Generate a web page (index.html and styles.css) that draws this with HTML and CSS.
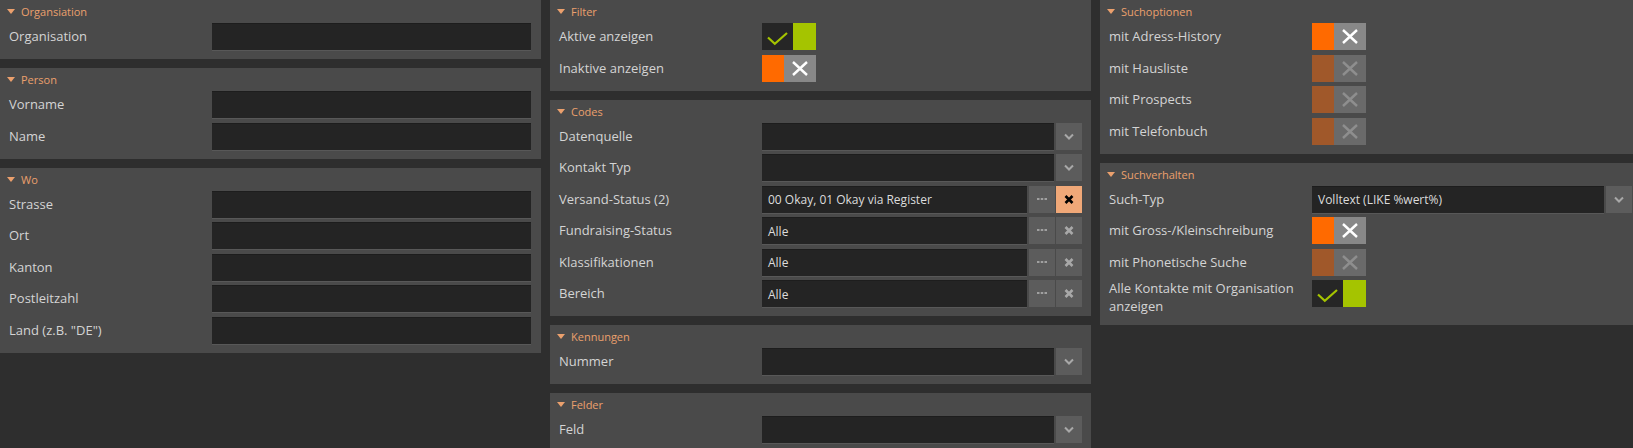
FILE: index.html
```html
<!DOCTYPE html>
<html>
<head>
  <title>Kontaktsuche</title>
  <link rel="stylesheet" href="styles.css">
</head>
<body>
  <div class="page">

    <div class="col">
      <section class="panel">
        <div class="panel-head"><span class="caret"></span>Organsiation</div>
        <div class="row"><span class="label">Organisation</span><div class="field"><span class="input"></span></div></div>
      </section>

      <section class="panel">
        <div class="panel-head"><span class="caret"></span>Person</div>
        <div class="row"><span class="label">Vorname</span><div class="field"><span class="input"></span></div></div>
        <div class="row"><span class="label">Name</span><div class="field"><span class="input"></span></div></div>
      </section>

      <section class="panel">
        <div class="panel-head"><span class="caret"></span>Wo</div>
        <div class="row"><span class="label">Strasse</span><div class="field"><span class="input"></span></div></div>
        <div class="row"><span class="label">Ort</span><div class="field"><span class="input"></span></div></div>
        <div class="row"><span class="label">Kanton</span><div class="field"><span class="input"></span></div></div>
        <div class="row"><span class="label">Postleitzahl</span><div class="field"><span class="input"></span></div></div>
        <div class="row"><span class="label">Land (z.B. "DE")</span><div class="field"><span class="input"></span></div></div>
      </section>
    </div>

    <div class="col">
      <section class="panel">
        <div class="panel-head"><span class="caret"></span>Filter</div>
        <div class="row">
          <span class="label">Aktive anzeigen</span>
          <div class="toggle on">
            <span class="knob"><svg viewBox="0 0 31 27" width="31" height="27"><path d="M6 14.5 L12.8 20.8 L25 10" fill="none" stroke="#a5c400" stroke-width="2.2"/></svg></span>
            <span class="state"></span>
          </div>
        </div>
        <div class="row">
          <span class="label">Inaktive anzeigen</span>
          <div class="toggle off">
            <span class="state"></span>
            <span class="knob"><svg viewBox="0 0 32 27" width="32" height="27"><path d="M9 7 L23 20 M23 7 L9 20" fill="none" stroke="#fff" stroke-width="2.4"/></svg></span>
          </div>
        </div>
      </section>

      <section class="panel">
        <div class="panel-head"><span class="caret"></span>Codes</div>
        <div class="row">
          <span class="label">Datenquelle</span>
          <div class="field"><span class="input"></span><span class="btn"><svg viewBox="0 0 26 27" width="26" height="27"><path d="M9 11.5 L13 15.5 L17 11.5" fill="none" stroke="#a8a8a8" stroke-width="2"/></svg></span></div>
        </div>
        <div class="row">
          <span class="label">Kontakt Typ</span>
          <div class="field"><span class="input"></span><span class="btn"><svg viewBox="0 0 26 27" width="26" height="27"><path d="M9 11.5 L13 15.5 L17 11.5" fill="none" stroke="#a8a8a8" stroke-width="2"/></svg></span></div>
        </div>
        <div class="row">
          <span class="label">Versand-Status (2)</span>
          <div class="field">
            <span class="input">00 Okay, 01 Okay via Register</span>
            <span class="btn"><svg viewBox="0 0 26 27" width="26" height="27"><g fill="#a0a0a0"><rect x="8" y="12" width="2.5" height="2"/><rect x="11.75" y="12" width="2.5" height="2"/><rect x="15.5" y="12" width="2.5" height="2"/></g></svg></span>
            <span class="btn clear active"><svg viewBox="0 0 26 27" width="26" height="27"><path d="M9.5 10 L16.5 17 M16.5 10 L9.5 17" fill="none" stroke="#000" stroke-width="2.6"/></svg></span>
          </div>
        </div>
        <div class="row">
          <span class="label">Fundraising-Status</span>
          <div class="field">
            <span class="input">Alle</span>
            <span class="btn"><svg viewBox="0 0 26 27" width="26" height="27"><g fill="#a0a0a0"><rect x="8" y="12" width="2.5" height="2"/><rect x="11.75" y="12" width="2.5" height="2"/><rect x="15.5" y="12" width="2.5" height="2"/></g></svg></span>
            <span class="btn clear"><svg viewBox="0 0 26 27" width="26" height="27"><path d="M9.5 10 L16.5 17 M16.5 10 L9.5 17" fill="none" stroke="#a8a8a8" stroke-width="2.6"/></svg></span>
          </div>
        </div>
        <div class="row">
          <span class="label">Klassifikationen</span>
          <div class="field">
            <span class="input">Alle</span>
            <span class="btn"><svg viewBox="0 0 26 27" width="26" height="27"><g fill="#a0a0a0"><rect x="8" y="12" width="2.5" height="2"/><rect x="11.75" y="12" width="2.5" height="2"/><rect x="15.5" y="12" width="2.5" height="2"/></g></svg></span>
            <span class="btn clear"><svg viewBox="0 0 26 27" width="26" height="27"><path d="M9.5 10 L16.5 17 M16.5 10 L9.5 17" fill="none" stroke="#a8a8a8" stroke-width="2.6"/></svg></span>
          </div>
        </div>
        <div class="row">
          <span class="label">Bereich</span>
          <div class="field">
            <span class="input">Alle</span>
            <span class="btn"><svg viewBox="0 0 26 27" width="26" height="27"><g fill="#a0a0a0"><rect x="8" y="12" width="2.5" height="2"/><rect x="11.75" y="12" width="2.5" height="2"/><rect x="15.5" y="12" width="2.5" height="2"/></g></svg></span>
            <span class="btn clear"><svg viewBox="0 0 26 27" width="26" height="27"><path d="M9.5 10 L16.5 17 M16.5 10 L9.5 17" fill="none" stroke="#a8a8a8" stroke-width="2.6"/></svg></span>
          </div>
        </div>
      </section>

      <section class="panel">
        <div class="panel-head"><span class="caret"></span>Kennungen</div>
        <div class="row">
          <span class="label">Nummer</span>
          <div class="field"><span class="input"></span><span class="btn"><svg viewBox="0 0 26 27" width="26" height="27"><path d="M9 11.5 L13 15.5 L17 11.5" fill="none" stroke="#a8a8a8" stroke-width="2"/></svg></span></div>
        </div>
      </section>

      <section class="panel">
        <div class="panel-head"><span class="caret"></span>Felder</div>
        <div class="row">
          <span class="label">Feld</span>
          <div class="field"><span class="input"></span><span class="btn"><svg viewBox="0 0 26 27" width="26" height="27"><path d="M9 11.5 L13 15.5 L17 11.5" fill="none" stroke="#a8a8a8" stroke-width="2"/></svg></span></div>
        </div>
      </section>
    </div>

    <div class="col">
      <section class="panel">
        <div class="panel-head"><span class="caret"></span>Suchoptionen</div>
        <div class="row">
          <span class="label">mit Adress-History</span>
          <div class="toggle off">
            <span class="state"></span>
            <span class="knob"><svg viewBox="0 0 32 27" width="32" height="27"><path d="M9 7 L23 20 M23 7 L9 20" fill="none" stroke="#fff" stroke-width="2.4"/></svg></span>
          </div>
        </div>
        <div class="row">
          <span class="label">mit Hausliste</span>
          <div class="toggle off disabled">
            <span class="state"></span>
            <span class="knob"><svg viewBox="0 0 32 27" width="32" height="27"><path d="M9 7 L23 20 M23 7 L9 20" fill="none" stroke="#8e8e8e" stroke-width="2.4"/></svg></span>
          </div>
        </div>
        <div class="row">
          <span class="label">mit Prospects</span>
          <div class="toggle off disabled">
            <span class="state"></span>
            <span class="knob"><svg viewBox="0 0 32 27" width="32" height="27"><path d="M9 7 L23 20 M23 7 L9 20" fill="none" stroke="#8e8e8e" stroke-width="2.4"/></svg></span>
          </div>
        </div>
        <div class="row">
          <span class="label">mit Telefonbuch</span>
          <div class="toggle off disabled">
            <span class="state"></span>
            <span class="knob"><svg viewBox="0 0 32 27" width="32" height="27"><path d="M9 7 L23 20 M23 7 L9 20" fill="none" stroke="#8e8e8e" stroke-width="2.4"/></svg></span>
          </div>
        </div>
      </section>

      <section class="panel">
        <div class="panel-head"><span class="caret"></span>Suchverhalten</div>
        <div class="row">
          <span class="label">Such-Typ</span>
          <div class="field"><span class="input">Volltext (LIKE %wert%)</span><span class="btn"><svg viewBox="0 0 26 27" width="26" height="27"><path d="M9 11.5 L13 15.5 L17 11.5" fill="none" stroke="#a8a8a8" stroke-width="2"/></svg></span></div>
        </div>
        <div class="row">
          <span class="label">mit Gross-/Kleinschreibung</span>
          <div class="toggle off">
            <span class="state"></span>
            <span class="knob"><svg viewBox="0 0 32 27" width="32" height="27"><path d="M9 7 L23 20 M23 7 L9 20" fill="none" stroke="#fff" stroke-width="2.4"/></svg></span>
          </div>
        </div>
        <div class="row">
          <span class="label">mit Phonetische Suche</span>
          <div class="toggle off disabled">
            <span class="state"></span>
            <span class="knob"><svg viewBox="0 0 32 27" width="32" height="27"><path d="M9 7 L23 20 M23 7 L9 20" fill="none" stroke="#8e8e8e" stroke-width="2.4"/></svg></span>
          </div>
        </div>
        <div class="row tall">
          <span class="label">Alle Kontakte mit Organisation anzeigen</span>
          <div class="toggle on">
            <span class="knob"><svg viewBox="0 0 31 27" width="31" height="27"><path d="M6 14.5 L12.8 20.8 L25 10" fill="none" stroke="#a5c400" stroke-width="2.2"/></svg></span>
            <span class="state"></span>
          </div>
        </div>
      </section>
    </div>

  </div>
</body>
</html>
```

FILE: styles.css
```css
:root {
  --bg-color: #2e2e2e;
  --panel-color: #4a4a4a;
  --input-color: #242424;
  --button-color: #5c5c5c;
  --accent-color: #eba06d;
  --text-color: #d4d4d4;
  --green: #a5c400;
  --orange: #ff6a00;
}

body {
  margin: 0;
  height: 448px;
  overflow: hidden;
  background: var(--bg-color);
  color: var(--text-color);
  font-family: 'Open Sans', 'Noto Sans', sans-serif;
  font-size: 13px;
}

.page {
  display: flex;
  gap: 9px;
}

.col {
  width: 541px;
  flex-shrink: 0;
  display: flex;
  flex-direction: column;
  gap: 9px;
}

.panel {
  background: var(--panel-color);
  padding: 0 9px 9px;
  display: flex;
  flex-direction: column;
  gap: 4.5px;
}

.panel-head {
  height: 23px;
  margin-bottom: -4.5px;
  display: flex;
  align-items: center;
  gap: 6px;
  color: var(--accent-color);
  font-size: 11px;
}

.caret {
  width: 0;
  height: 0;
  margin-left: -2px;
  border-left: 4px solid transparent;
  border-right: 4px solid transparent;
  border-top: 5px solid var(--accent-color);
}

.row {
  display: grid;
  grid-template-columns: 203px 1fr;
  align-items: center;
  min-height: 27px;
}

.row.tall {
  align-items: start;
  min-height: 36px;
}

.row.tall .label {
  line-height: 18px;
  margin-top: -1px;
  padding-right: 8px;
}

.label {
  margin-top: -1px;
}

.field {
  display: flex;
  height: 27px;
  gap: 1px;
}

.input {
  flex: 1;
  box-sizing: border-box;
  height: 27px;
  margin-right: 1px;
  padding: 0 6px;
  background: var(--input-color);
  border-top: 1px solid #1d1d1d;
  box-shadow: 0 1px 0 #585858;
  display: flex;
  align-items: center;
  font-size: 12px;
  color: #dcdcdc;
}

.btn {
  width: 26px;
  height: 27px;
  flex-shrink: 0;
  background: var(--button-color);
}

.btn svg {
  display: block;
}

.btn.clear.active {
  background: #f0a878;
}

.toggle {
  display: flex;
  width: 54px;
  height: 27px;
}

.toggle svg {
  display: block;
}

.toggle.on .knob {
  width: 31px;
  background: #262626;
}

.toggle.on .state {
  width: 23px;
  background: var(--green);
}

.toggle.off .state {
  width: 22px;
  background: var(--orange);
}

.toggle.off .knob {
  width: 32px;
  background: #888888;
}

.toggle.disabled .state {
  background: #a0582a;
}

.toggle.disabled .knob {
  background: #6a6a6a;
}
```
